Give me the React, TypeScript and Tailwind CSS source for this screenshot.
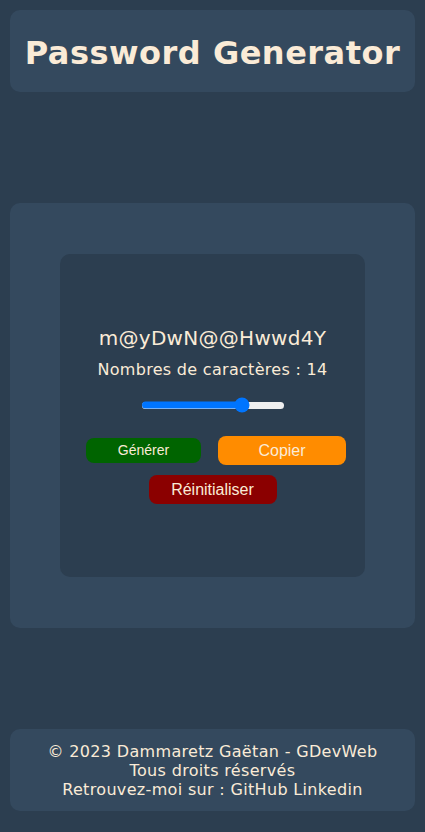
import React from "react";

export default function App() {
  const pct = (241 - 141) / 142;
  return (
    <div className="min-h-[832px] w-full bg-[#2c3e50] px-[10px] pt-[10px] font-['DejaVu_Sans',Verdana,sans-serif] text-[#faebd7]">
      <header className="rounded-[10px] bg-[#34495e] pt-[25px] pb-[20px] text-center">
        <h1 className="text-[32px] leading-[37px] font-bold tracking-[0.5px]">Password Generator</h1>
      </header>

      <main className="mt-[111px] rounded-[10px] bg-[#34495e] px-[50px] py-[51px]">
        <div className="flex h-[323px] flex-col items-center justify-center rounded-[10px] bg-[#2c3e50]">
          <p className="text-[20px] leading-[23px] tracking-[0.3px]">m@yDwN@@Hwwd4Y</p>
          <p className="mt-[10px] text-[16px] leading-[19px] tracking-[0.3px]">Nombres de caractères : 14</p>
          <div className="relative mt-[18px] flex h-[16px] w-[142px] items-center">
            <div className="h-[7px] w-full rounded-full bg-[#efefef]" />
            <div
              className="absolute left-0 top-1/2 h-[7px] -translate-y-1/2 rounded-full bg-[#0075ff]"
              style={{ width: `${pct * 100}%` }}
            />
            <div
              className="absolute top-1/2 h-[15px] w-[15px] -translate-x-1/2 -translate-y-1/2 rounded-full bg-[#0075ff]"
              style={{ left: `${pct * 100}%` }}
            />
          </div>
          <div className="mt-[23px] flex items-center self-stretch pl-[26px] font-['Liberation_Sans',Arial,sans-serif]">
            <button className="flex h-[25px] w-[115px] items-center justify-center rounded-[8px] bg-[#006400] text-[14px] text-[#faebd7]">
              Générer
            </button>
            <button className="ml-[17px] flex h-[29px] w-[128px] items-center justify-center rounded-[8px] bg-[#ff8c00] text-[16px] text-[#faebd7]">
              Copier
            </button>
          </div>
          <button className="mt-[10px] flex h-[29px] w-[128px] items-center justify-center rounded-[8px] bg-[#8b0000] font-['Liberation_Sans',Arial,sans-serif] text-[16px] text-[#faebd7]">
            Réinitialiser
          </button>
        </div>
      </main>

      <footer className="mt-[101px] flex h-[82px] flex-col items-center justify-center rounded-[10px] bg-[#34495e] text-center text-[16px] leading-[19px] tracking-[0.33px]">
        <p>© 2023 Dammaretz Gaëtan - GDevWeb</p>
        <p>Tous droits réservés</p>
        <p>Retrouvez-moi sur : GitHub Linkedin</p>
      </footer>
    </div>
  );
}
